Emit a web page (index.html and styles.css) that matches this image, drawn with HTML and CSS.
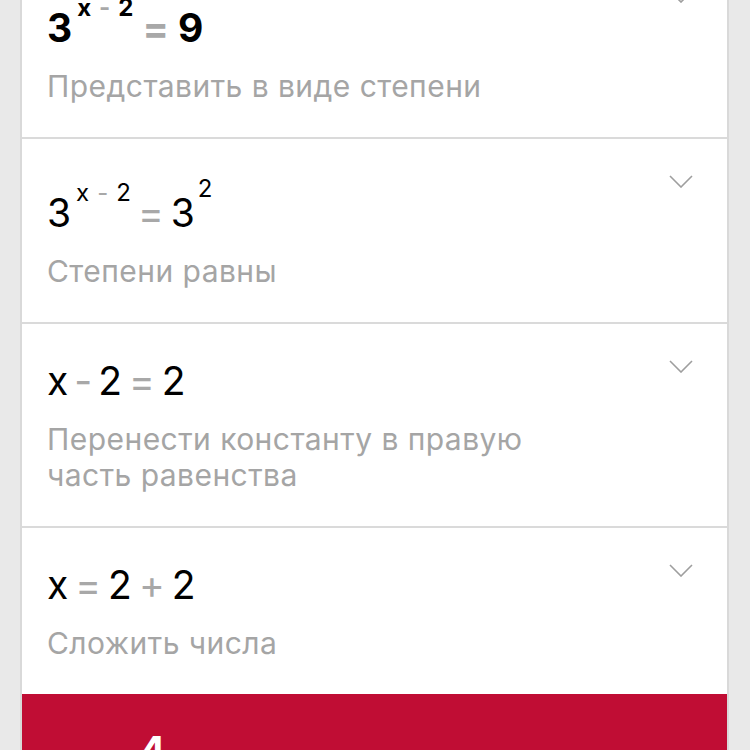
FILE: index.html
```html
<!DOCTYPE html>
<html lang="ru">
<head>
<meta charset="utf-8">
<title>Решение</title>
<link rel="stylesheet" href="styles.css">
</head>
<body>
<div class="card">
  <div class="step">
    <div class="body sup-row">
      <div class="math bold">3<span class="sup">x<span class="op">-</span>2</span><span class="op eq">=</span>9</div>
      <div class="desc">Представить в виде степени</div>
    </div>
    <svg class="chev" viewBox="0 0 24 13" width="24" height="13"><path d="M1 1 L12 12 L23 1" /></svg>
  </div>
  <div class="step">
    <div class="body sup-row">
      <div class="math">3<span class="sup">x<span class="op">-</span>2</span><span class="op eq">=</span>3<span class="sup sup2">2</span></div>
      <div class="desc">Степени равны</div>
    </div>
    <svg class="chev" viewBox="0 0 24 13" width="24" height="13"><path d="M1 1 L12 12 L23 1" /></svg>
  </div>
  <div class="step">
    <div class="body">
      <div class="math">x<span class="op">-</span>2<span class="op eq">=</span>2</div>
      <div class="desc">Перенести константу в правую<br>часть равенства</div>
    </div>
    <svg class="chev" viewBox="0 0 24 13" width="24" height="13"><path d="M1 1 L12 12 L23 1" /></svg>
  </div>
  <div class="step last">
    <div class="body">
      <div class="math">x<span class="op eq">=</span>2<span class="op eq">+</span>2</div>
      <div class="desc">Сложить числа</div>
    </div>
    <svg class="chev" viewBox="0 0 24 13" width="24" height="13"><path d="M1 1 L12 12 L23 1" /></svg>
  </div>
  <div class="answer"><span class="answer-val">4</span></div>
</div>
</body>
</html>
```

FILE: styles.css
```css
html, body {
  margin: 0;
  padding: 0;
  height: 750px;
  overflow: hidden;
  background: #e9e9e9;
  font-family: Inter, "Liberation Sans", Arial, sans-serif;
}

.card {
  margin: -46px 21px 0 20px;
  background: #ffffff;
  border-left: 2px solid #d9d9d9;
  border-right: 2px solid #d9d9d9;
}

.step {
  display: flex;
  align-items: flex-start;
  padding: 0 34px 0 25px;
  border-bottom: 2px solid #dadada;
}

.step.last {
  border-bottom: none;
}

.body {
  flex: 1;
  padding: 33px 0 33px 0;
}

.body.sup-row {
  padding-top: 50px;
}

.math {
  font-size: 39px;
  line-height: 48px;
  color: #000;
  white-space: nowrap;
}

.math.bold {
  font-weight: 700;
}

.op {
  color: #a8a8a8;
  margin: 0 6px;
}

.op.eq {
  margin: 0 7px;
}

.math.bold .op.eq {
  margin: 0 9px;
}

.sup {
  font-size: 24px;
  line-height: 0;
  vertical-align: 26px;
  margin-left: 5px;
}

.sup .op {
  margin: 0 8px;
}

.sup2 {
  vertical-align: 30px;
  margin-left: 3px;
}

.desc {
  margin-top: 16px;
  font-size: 30px;
  line-height: 36px;
  letter-spacing: 0.45px;
  color: #a5a5a5;
}

.chev {
  margin-top: 36px;
  flex: none;
}

.chev path {
  fill: none;
  stroke: #9e9e9e;
  stroke-width: 1.6;
}

.answer {
  background: #c00d34;
  height: 120px;
  padding: 33px 0 0 117px;
}

.answer-val {
  color: #fff;
  font-size: 40px;
  line-height: 48px;
  font-weight: 700;
}
```
